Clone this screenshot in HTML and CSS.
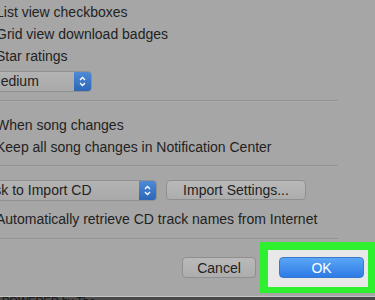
FILE: index.html
```html
<!DOCTYPE html>
<html lang="en">
<head>
  <meta charset="UTF-8" />
  <title>Preferences</title>
  <meta name="viewport" content="width=device-width, initial-scale=1.0" />
  <link rel="stylesheet" href="styles.css">
</head>
<body>
  <div class="pane">
    <div class="section first">
      <div class="option">List view checkboxes</div>
      <div class="option">Grid view download badges</div>
      <div class="option">Star ratings</div>
      <div class="popup small">
        <span class="label">Medium</span>
        <span class="stepper">
          <svg width="7" height="11" viewBox="0 0 7 11"><path d="M1 4 L3.5 1.5 L6 4 M1 7 L3.5 9.5 L6 7" fill="none" stroke="#fff" stroke-width="1.3"/></svg>
        </span>
      </div>
    </div>

    <div class="rule"></div>

    <div class="section">
      <div class="option">When song changes</div>
      <div class="option">Keep all song changes in Notification Center</div>
    </div>

    <div class="rule"></div>

    <div class="section cd">
      <div class="row">
        <div class="popup wide">
          <span class="label">Ask to Import CD</span>
          <span class="stepper">
            <svg width="7" height="11" viewBox="0 0 7 11"><path d="M1 4 L3.5 1.5 L6 4 M1 7 L3.5 9.5 L6 7" fill="none" stroke="#fff" stroke-width="1.3"/></svg>
          </span>
        </div>
        <button class="btn">Import Settings...</button>
      </div>
      <div class="option">Automatically retrieve CD track names from Internet</div>
    </div>

    <div class="rule"></div>
  </div>

  <div class="footer">
    <button class="btn cancel">Cancel</button>
    <div class="highlight">
      <button class="btn ok">OK</button>
    </div>
  </div>

  <div class="under">
    <span>POWERED by The</span>
  </div>
</body>
</html>
```

FILE: styles.css
```css
body {
  margin: 0;
  background-color: #a6a6a6;
  font-family: "Liberation Sans", Arial, sans-serif;
  font-size: 14px;
  color: #222;
  overflow: hidden;
  height: 300px;
}

.pane {
  margin-left: -4px;
}

.section { padding: 12px 0 7px; }
.section.first { padding: 1px 0 8px; }
.section.cd { padding: 12px 0 8px; }

.option {
  height: 22px;
  line-height: 22px;
  white-space: nowrap;
}

.rule {
  width: 342px;
  height: 1px;
  background-color: #939393;
  border-bottom: 1px solid #aaa;
}

.popup {
  display: flex;
  align-items: stretch;
  height: 21px;
  box-sizing: border-box;
  border: 1px solid #909090;
  border-radius: 4px;
  background: linear-gradient(#b3b3b3, #a9a9a9);
  overflow: hidden;
}

.popup .label {
  flex: 1;
  padding-left: 8px;
  line-height: 19px;
  white-space: nowrap;
}

.popup .stepper {
  width: 17px;
  display: flex;
  align-items: center;
  justify-content: center;
  background: linear-gradient(#4f8ad6, #2d67b8);
}

.popup.small {
  margin-top: 4px;
  margin-left: -16px;
  width: 112px;
}

.row {
  display: flex;
  align-items: center;
  height: 22px;
  margin-bottom: 7px;
}

.popup.wide {
  margin-left: -20px;
  width: 181px;
}

.btn {
  font-family: inherit;
  font-size: 14px;
  color: #222;
  height: 20px;
  padding: 0;
  border: 1px solid #8f8f8f;
  border-radius: 4px;
  background: linear-gradient(#b9b9b9, #adadad);
  cursor: pointer;
}

.row .btn {
  margin-left: 9px;
  width: 140px;
}

.footer {
  display: flex;
  justify-content: flex-end;
  align-items: flex-start;
  margin-top: 2px;
}

.cancel {
  width: 74px;
  height: 21px;
  margin-top: 15px;
  margin-right: 4px;
}

.highlight {
  border: solid #2ef02e;
  border-width: 8px 7px 6px 8px;
  background-color: #e8e8e8;
  padding: 7px 4px 9px 11px;
}

.ok {
  display: block;
  width: 85px;
  height: 21px;
  border-color: #3a78d0;
  background: linear-gradient(#5ba6f6, #2c7be6);
  color: #fff;
}

.under {
  margin-top: 3px;
  height: 8px;
  border-top: 1px solid #c4c4c4;
  background-color: #4a4a4a;
  overflow: hidden;
  padding-left: 2px;
}

.under span {
  display: block;
  font-size: 11px;
  line-height: 11px;
  margin-top: -1px;
  color: #111;
}
```
